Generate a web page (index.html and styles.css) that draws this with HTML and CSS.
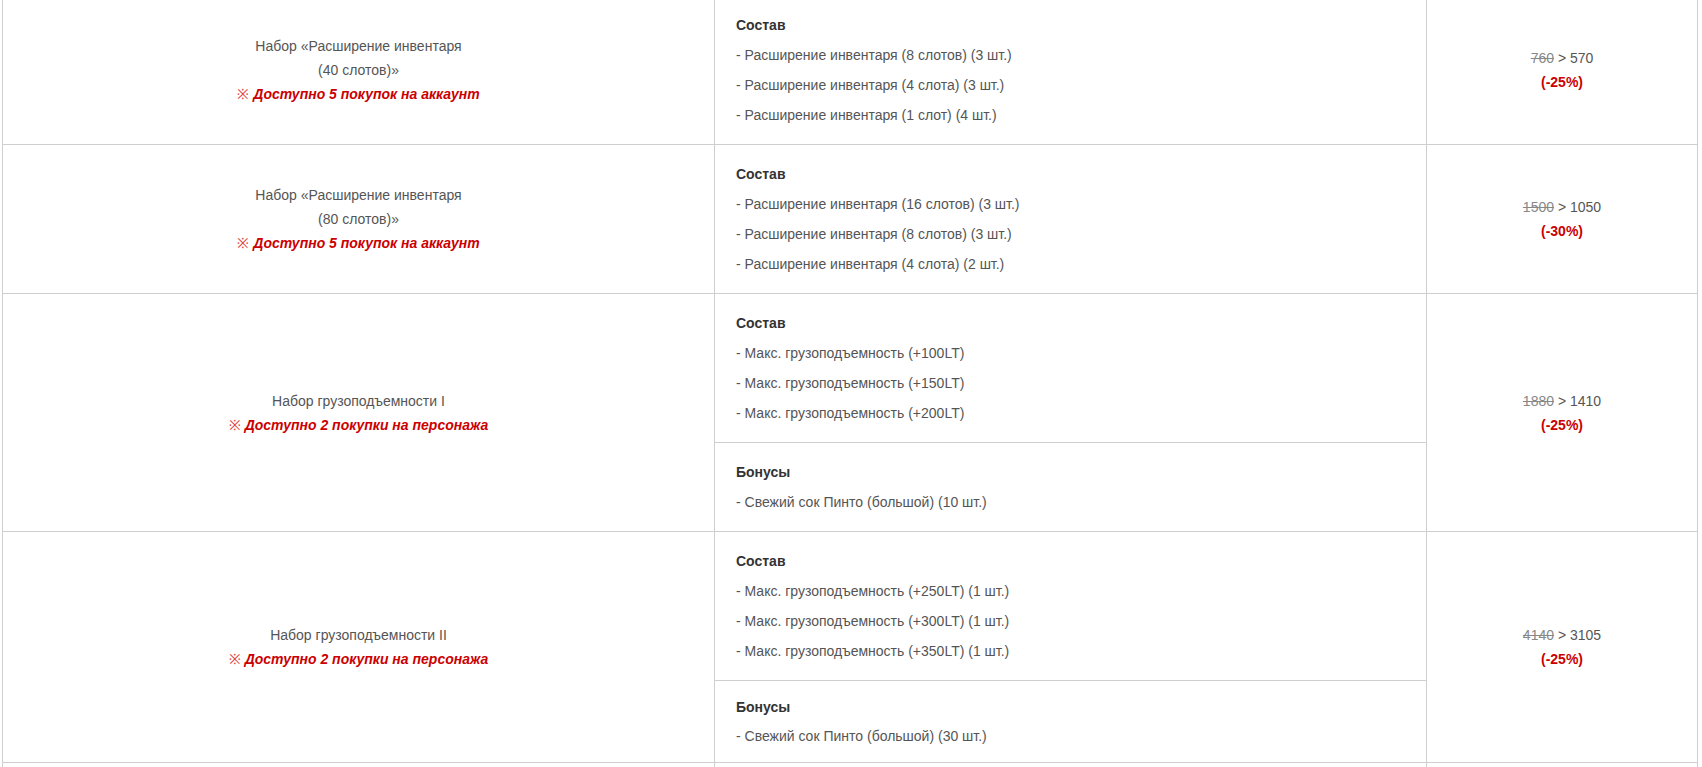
FILE: index.html
```html
<!DOCTYPE html>
<html lang="ru">
<head>
<meta charset="utf-8">
<title>Наборы</title>
<link rel="stylesheet" href="styles.css">
</head>
<body>
<table class="sets">
  <colgroup>
    <col class="c-name">
    <col class="c-content">
    <col class="c-price">
  </colgroup>
  <tbody>
    <tr>
      <td class="name">
        <div>Набор «Расширение инвентаря<br>(40 слотов)»</div>
        <div class="limit"><span class="mark">※</span> <em>Доступно 5 покупок на аккаунт</em></div>
      </td>
      <td class="content">
        <div class="list">
          <div class="head">Состав</div>
          <div>- Расширение инвентаря (8 слотов) (3 шт.)</div>
          <div>- Расширение инвентаря (4 слота) (3 шт.)</div>
          <div>- Расширение инвентаря (1 слот) (4 шт.)</div>
        </div>
      </td>
      <td class="price">
        <div><s>760</s> &gt; 570</div>
        <div class="off">(-25%)</div>
      </td>
    </tr>
    <tr>
      <td class="name">
        <div>Набор «Расширение инвентаря<br>(80 слотов)»</div>
        <div class="limit"><span class="mark">※</span> <em>Доступно 5 покупок на аккаунт</em></div>
      </td>
      <td class="content">
        <div class="list">
          <div class="head">Состав</div>
          <div>- Расширение инвентаря (16 слотов) (3 шт.)</div>
          <div>- Расширение инвентаря (8 слотов) (3 шт.)</div>
          <div>- Расширение инвентаря (4 слота) (2 шт.)</div>
        </div>
      </td>
      <td class="price">
        <div><s>1500</s> &gt; 1050</div>
        <div class="off">(-30%)</div>
      </td>
    </tr>
    <tr>
      <td class="name" rowspan="2">
        <div>Набор грузоподъемности I</div>
        <div class="limit"><span class="mark">※</span> <em>Доступно 2 покупки на персонажа</em></div>
      </td>
      <td class="content">
        <div class="list">
          <div class="head">Состав</div>
          <div>- Макс. грузоподъемность (+100LT)</div>
          <div>- Макс. грузоподъемность (+150LT)</div>
          <div>- Макс. грузоподъемность (+200LT)</div>
        </div>
      </td>
      <td class="price" rowspan="2">
        <div><s>1880</s> &gt; 1410</div>
        <div class="off">(-25%)</div>
      </td>
    </tr>
    <tr>
      <td class="content">
        <div class="list">
          <div class="head">Бонусы</div>
          <div>- Свежий сок Пинто (большой) (10 шт.)</div>
        </div>
      </td>
    </tr>
    <tr>
      <td class="name" rowspan="2">
        <div>Набор грузоподъемности II</div>
        <div class="limit"><span class="mark">※</span> <em>Доступно 2 покупки на персонажа</em></div>
      </td>
      <td class="content">
        <div class="list">
          <div class="head">Состав</div>
          <div>- Макс. грузоподъемность (+250LT) (1 шт.)</div>
          <div>- Макс. грузоподъемность (+300LT) (1 шт.)</div>
          <div>- Макс. грузоподъемность (+350LT) (1 шт.)</div>
        </div>
      </td>
      <td class="price" rowspan="2">
        <div><s>4140</s> &gt; 3105</div>
        <div class="off">(-25%)</div>
      </td>
    </tr>
    <tr>
      <td class="content compact">
        <div class="list">
          <div class="head">Бонусы</div>
          <div>- Свежий сок Пинто (большой) (30 шт.)</div>
        </div>
      </td>
    </tr>
    <tr class="next">
      <td class="name"></td>
      <td class="content"></td>
      <td class="price"></td>
    </tr>
  </tbody>
</table>
</body>
</html>
```
FILE: styles.css
```css
html, body {
  margin: 0;
  padding: 0;
  background: #fff;
}

body {
  font-family: "Liberation Sans", Arial, sans-serif;
  font-size: 14px;
  color: #555;
}

.sets {
  border-collapse: collapse;
  table-layout: fixed;
  width: 1695px;
  margin: -5px 0 0 2px;
}

.c-name { width: 712px; }
.c-content { width: 712px; }
.c-price { width: 271px; }

.sets td {
  border: 1px solid #cfcfcf;
  padding: 0;
}

.name {
  text-align: center;
  vertical-align: middle;
  line-height: 24px;
  color: #555;
}

.limit {
  color: #c00;
  font-weight: bold;
}

.limit em {
  font-style: italic;
}

.mark {
  font-weight: normal;
  color: #d44;
}

.content {
  vertical-align: top;
  padding: 19px 22px 19px 21px !important;
}

.content.compact {
  padding-top: 16px !important;
  padding-bottom: 16px !important;
}

.list {
  display: flex;
  flex-direction: column;
  gap: 10px;
  line-height: 20px;
}

.compact .list {
  gap: 9px;
}

.head {
  font-weight: bold;
  color: #333;
}

.price {
  text-align: center;
  vertical-align: middle;
  line-height: 24px;
  color: #555;
}

.price s {
  color: #888;
}

.off {
  color: #c00;
  font-weight: bold;
}

.next td {
  height: 120px;
}
```
